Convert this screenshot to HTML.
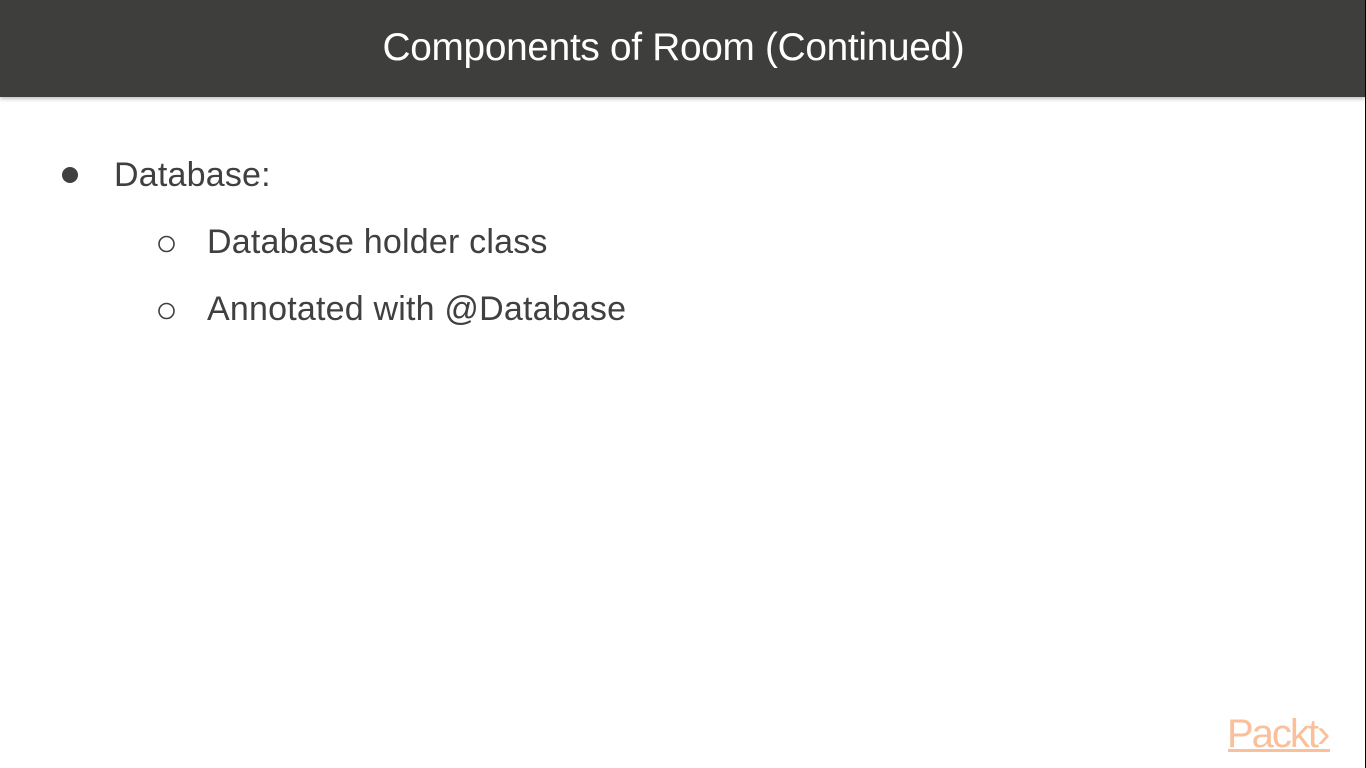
<!DOCTYPE html>
<html><head><style>
body{margin:0;width:1366px;height:768px;background:#fff;position:relative;overflow:hidden;font-family:"Liberation Sans",sans-serif;color:#404040}
.hdr{position:absolute;left:0;top:0;width:1365px;height:97px;background:#3e3e3c;box-shadow:0 2px 4px rgba(0,0,0,.25)}
.hdr div{position:absolute;left:0;right:18px;top:26px;text-align:center;color:#fff;font-size:38.8px;letter-spacing:-0.3px;line-height:44px}
.edge{position:absolute;right:0;top:0;width:1px;height:768px;background:#000}
.t{position:absolute;font-size:34px;white-space:nowrap;line-height:40px;letter-spacing:0.2px}
.logo{position:absolute;left:1227px;top:712px;color:#f9c09b;font-size:40px;letter-spacing:-2px;line-height:44px}
.ul{position:absolute;left:1228px;top:749px;width:102px;height:3px;background:#f9c09b}
</style></head><body>
<div class="hdr"><div>Components of Room (Continued)</div></div>
<div class="edge"></div>
<svg style="position:absolute;left:0;top:0" width="300" height="340">
<circle cx="70" cy="175" r="8" fill="#404040"/>
<circle cx="166.5" cy="244" r="7.5" fill="none" stroke="#404040" stroke-width="1.6"/>
<circle cx="166.5" cy="311" r="7.5" fill="none" stroke="#404040" stroke-width="1.6"/>
</svg>
<div class="t" style="left:114px;top:155px">Database:</div>
<div class="t" style="left:207px;top:222px">Database holder class</div>
<div class="t" style="left:207px;top:289px">Annotated with @Database</div>
<div class="logo">Packt&rsaquo;</div>
<div class="ul"></div>
</body></html>
